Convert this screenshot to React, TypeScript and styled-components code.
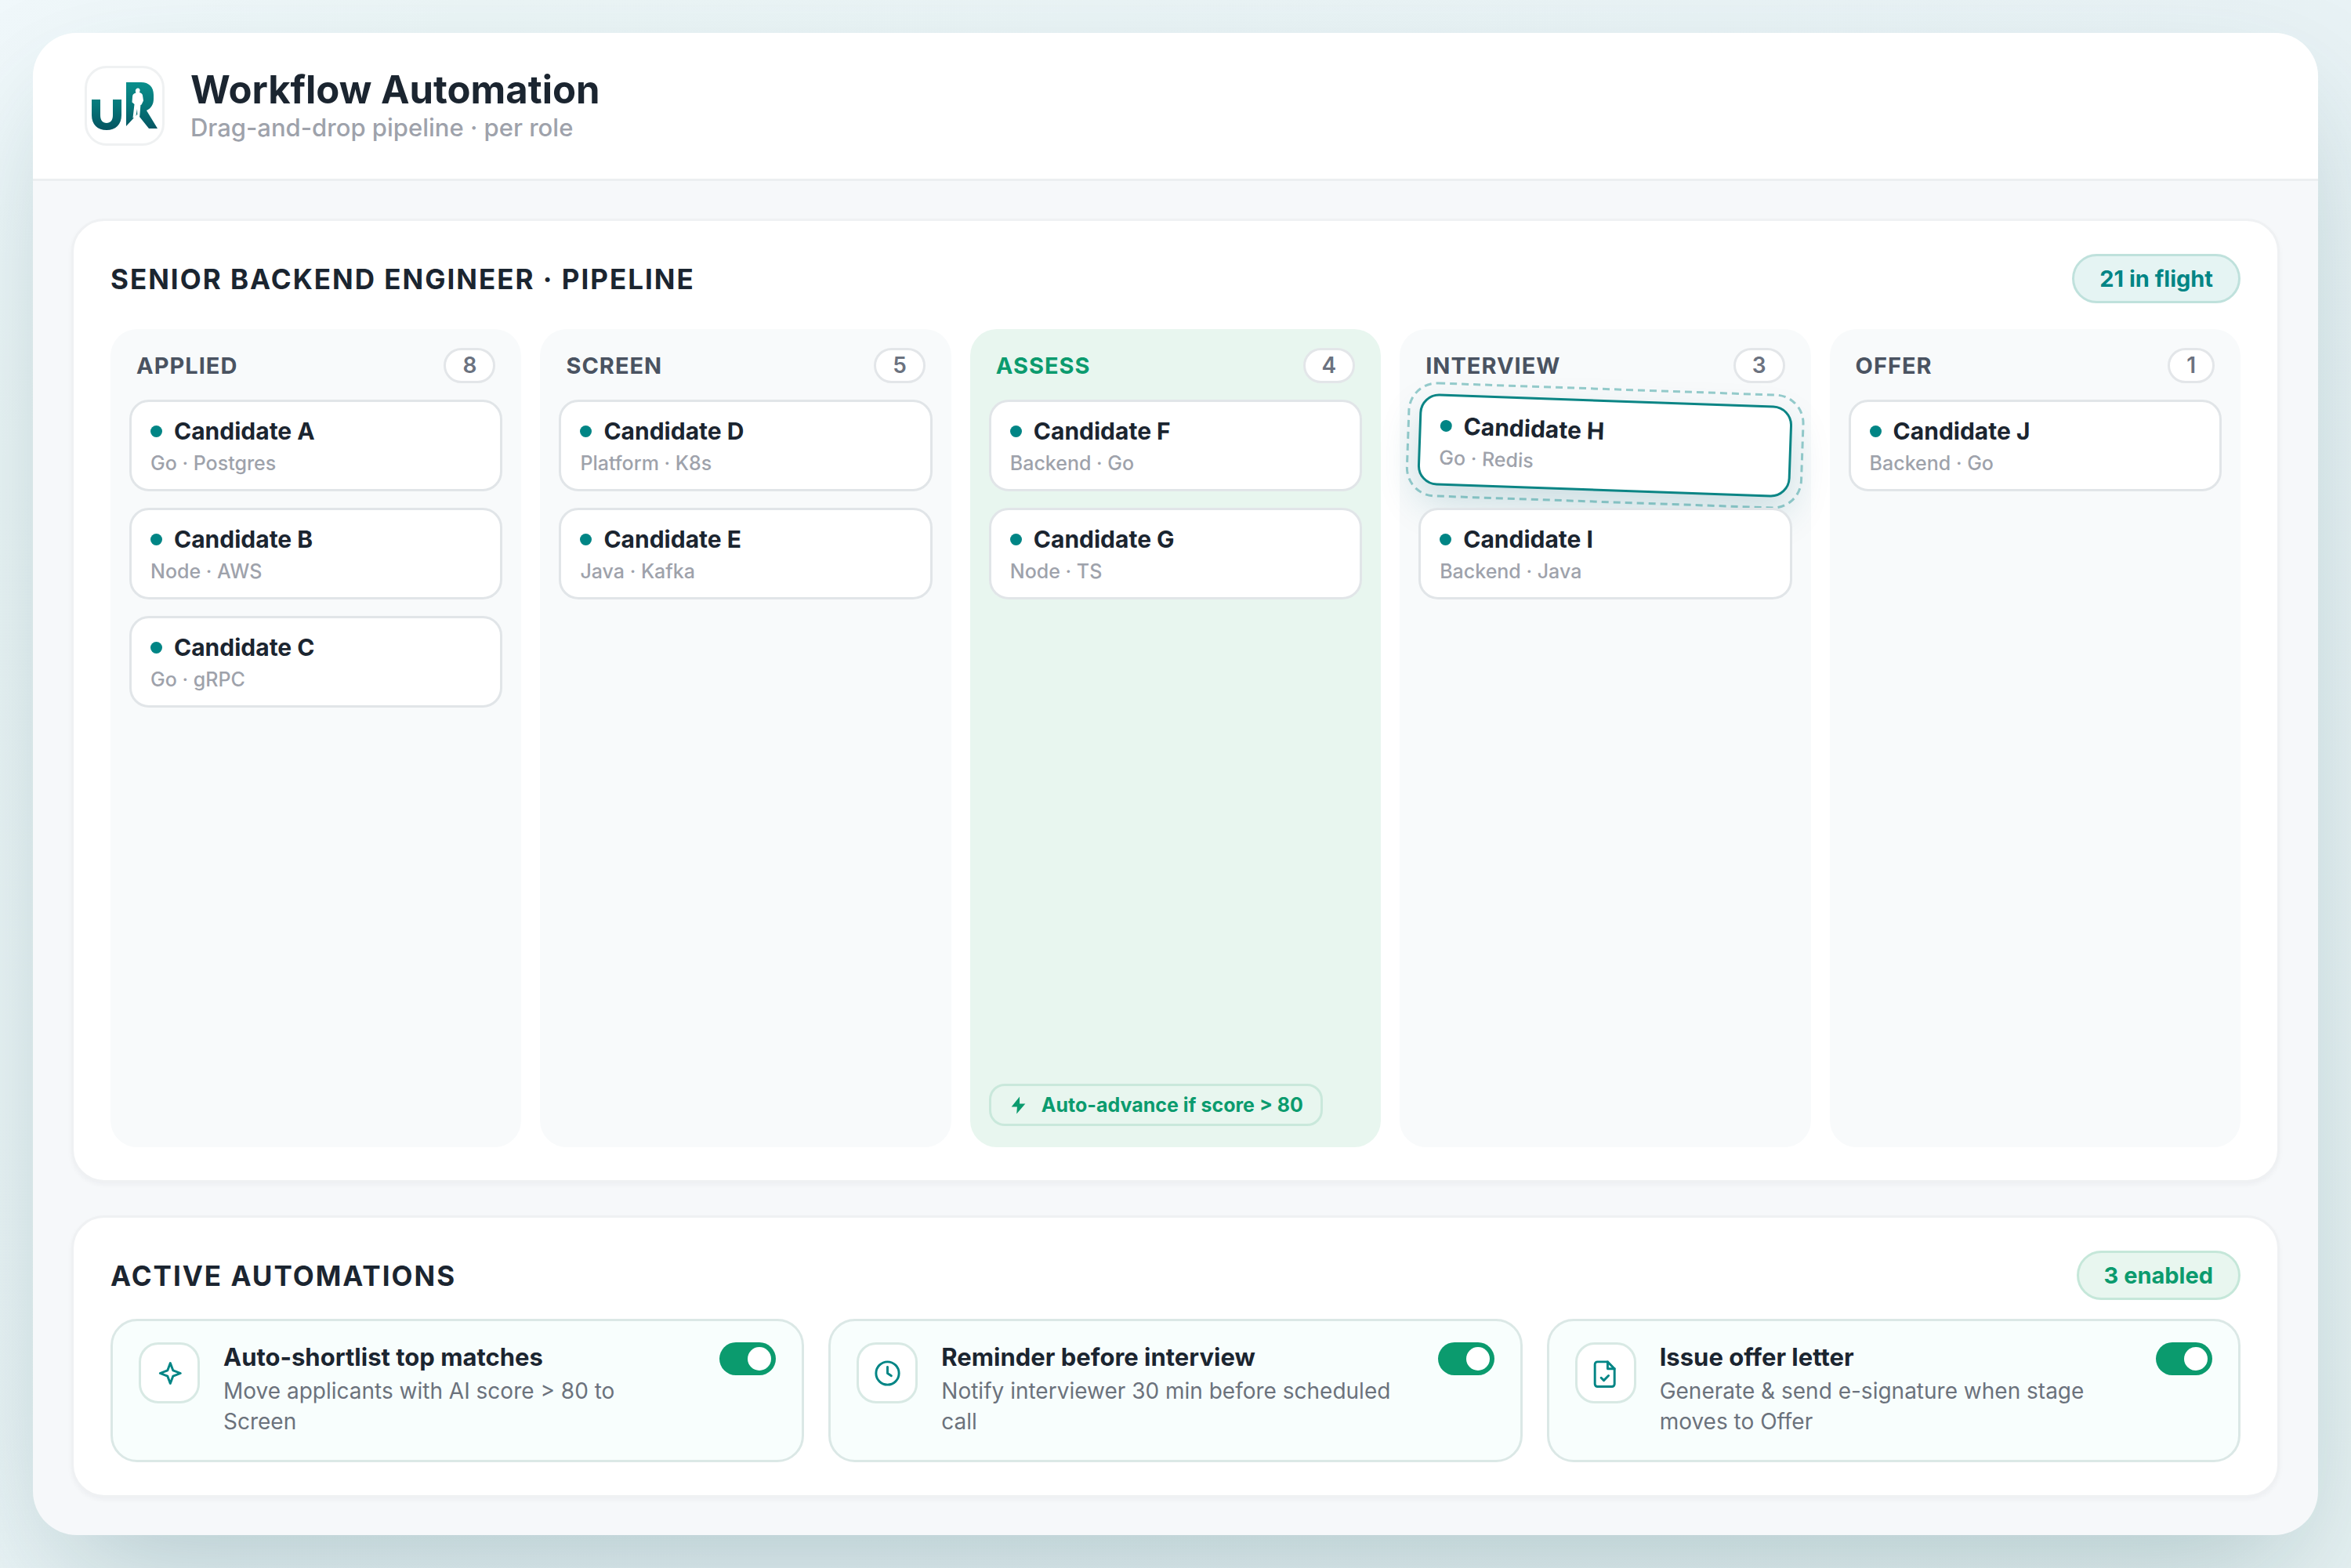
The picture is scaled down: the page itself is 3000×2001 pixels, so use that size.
import React from "react";
import styled, { createGlobalStyle, css } from "styled-components";

const INK = "#1b2530";
const TEAL = "#008585";
const GREEN = "#0b9b6e";

const GlobalStyle = createGlobalStyle`
  *, *::before, *::after { box-sizing: border-box; }
  body {
    margin: 0;
    font-family: Inter, "Liberation Sans", sans-serif;
    color: ${INK};
  }
  h1, h2, h3, p, ul { margin: 0; padding: 0; }
  ul { list-style: none; }
`;

const Page = styled.div`
  min-height: 100vh;
  display: flex;
  padding: 42px;
  overflow: hidden;
  background: linear-gradient(135deg, #f0f8fb 0%, #ebf5f6 12%, #e8f2f5 60%, #e6f1f2 100%);
`;

const Window = styled.main`
  flex: 1;
  min-width: 0;
  display: flex;
  flex-direction: column;
  border-radius: 56px;
  background: #f6f8fa;
  box-shadow: 0 68px 168px -34px rgba(10, 70, 80, 0.25);
`;

const Header = styled.header`
  display: flex;
  align-items: center;
  gap: 33px;
  padding: 42px 66px;
  border-bottom: 3px solid #eceff1;
  border-radius: 56px 56px 0 0;
  background: #fff;
`;

const LogoBox = styled.div`
  width: 102px;
  height: 102px;
  display: grid;
  place-items: center;
  border: 3px solid #eff1f2;
  border-radius: 28px;
  background: #fff;
`;

const Heading = styled.div`
  display: flex;
  flex-direction: column;
  gap: 3px;
`;

const Title = styled.h1`
  font-size: 49px;
  line-height: 52px;
  font-weight: 700;
`;

const Subtitle = styled.p`
  font-size: 31px;
  line-height: 38px;
  font-weight: 500;
  color: #9ea2ab;
`;

const Body = styled.div`
  flex: 1;
  display: flex;
  flex-direction: column;
  gap: 42px;
  padding: 48px 49px;
`;

const Panel = styled.section<{ $gap: number; $grow?: boolean }>`
  flex: ${(p) => (p.$grow ? "1 0 auto" : "none")};
  display: flex;
  flex-direction: column;
  gap: ${(p) => p.$gap}px;
  padding: 42px 47px;
  border: 3px solid #eff1f3;
  border-radius: 42px;
  background: #fff;
  box-shadow: 0 3px 6px rgba(20, 35, 45, 0.04);
`;

const PanelHead = styled.div`
  display: flex;
  align-items: center;
  justify-content: space-between;
`;

const PanelTitle = styled.h2`
  font-size: 35px;
  line-height: 42px;
  font-weight: 700;
  letter-spacing: 2px;
  text-transform: uppercase;
`;

const Chip = styled.span<{ $green?: boolean }>`
  padding: 11px 32px;
  border: 3px solid ${(p) => (p.$green ? "#c5e7d9" : "#bfe1dc")};
  border-radius: 32px;
  font-size: 29px;
  line-height: 35px;
  font-weight: 700;
  color: ${(p) => (p.$green ? GREEN : TEAL)};
  background: ${(p) => (p.$green ? "#e8f6ef" : "#e5f4f3")};
`;

const Board = styled.div`
  flex: 1;
  display: grid;
  grid-template-columns: repeat(5, minmax(0, 1fr));
  gap: 24px;
`;

const Column = styled.section<{ $active?: boolean }>`
  display: flex;
  flex-direction: column;
  align-items: stretch;
  gap: 21px;
  padding: 24px 24px 27px;
  border-radius: 34px;
  background: ${(p) => (p.$active ? "#e8f6ef" : "#f8fafb")};
`;

const ColumnHead = styled.div`
  display: flex;
  align-items: center;
  justify-content: space-between;
  padding: 0 9px;
`;

const ColumnTitle = styled.h3<{ $active?: boolean }>`
  font-size: 29px;
  line-height: 34px;
  font-weight: 700;
  letter-spacing: 1px;
  text-transform: uppercase;
  color: ${(p) => (p.$active ? GREEN : "#4a5361")};
`;

const Count = styled.span`
  padding: 2px 21px;
  border: 3px solid #e3e6e9;
  border-radius: 23px;
  font-size: 28px;
  line-height: 35px;
  font-weight: 600;
  color: #6b727f;
  background: #fff;
`;

const CardList = styled.ul`
  display: flex;
  flex-direction: column;
  gap: 21px;
`;

const Card = styled.li<{ $dragging?: boolean }>`
  position: relative;
  display: flex;
  flex-direction: column;
  gap: 8px;
  padding: 19px 24px 18px;
  border: 3px solid #e1e5e8;
  border-radius: 25px;
  background: #fff;
  ${(p) =>
    p.$dragging &&
    css`
      border-color: #0b8585;
      transform: rotate(2deg);
      box-shadow: 0 22px 50px rgba(0, 100, 115, 0.18);
    `}
`;

const Name = styled.span`
  display: flex;
  align-items: center;
  gap: 15px;
  font-size: 30px;
  line-height: 36px;
  font-weight: 700;

  &::before {
    content: "";
    width: 15px;
    height: 15px;
    border-radius: 50%;
    background: ${TEAL};
  }
`;

const Skills = styled.span`
  font-size: 25px;
  line-height: 30px;
  font-weight: 500;
  color: #9ea2ab;
`;

const DropOutline = styled.svg`
  position: absolute;
  inset: -18px;
  width: calc(100% + 36px);
  height: calc(100% + 36px);
  overflow: visible;
  pointer-events: none;

  rect {
    x: 1.5px;
    y: 1.5px;
    width: calc(100% - 3px);
    height: calc(100% - 3px);
    fill: none;
    stroke: ${TEAL};
    stroke-opacity: 0.4;
    stroke-width: 3px;
    stroke-dasharray: 9 6;
  }
`;

const Rule = styled.p`
  display: flex;
  align-items: center;
  align-self: flex-start;
  gap: 17px;
  margin-top: auto;
  padding: 9px 22px;
  border: 3px solid #c9e8db;
  border-radius: 20px;
  font-size: 25px;
  line-height: 30px;
  font-weight: 700;
  color: ${GREEN};
`;

const Automations = styled.div`
  display: grid;
  grid-template-columns: repeat(3, minmax(0, 1fr));
  gap: 31px;
`;

const Automation = styled.article`
  display: flex;
  align-items: flex-start;
  gap: 30px;
  padding: 27px 33px 29px;
  border: 3px solid #dbe8e6;
  border-radius: 34px;
  background: #f8fefd;
`;

const IconBox = styled.div`
  flex: none;
  width: 78px;
  height: 78px;
  display: grid;
  place-items: center;
  border: 3px solid #d8e9e4;
  border-radius: 25px;
  background: #fff;
  color: ${TEAL};
`;

const AutomationText = styled.div`
  flex: 1;
  min-width: 0;
  display: flex;
  flex-direction: column;
  gap: 5px;
  padding-right: 14px;
`;

const AutomationName = styled.label`
  font-size: 31px;
  line-height: 38px;
  font-weight: 700;
`;

const AutomationNote = styled.p`
  font-size: 28px;
  line-height: 39px;
  color: #6b727c;
`;

const Switch = styled.input`
  appearance: none;
  flex: none;
  width: 72px;
  height: 42px;
  margin: 0;
  padding: 6px;
  display: flex;
  justify-content: flex-start;
  border-radius: 21px;
  background: #c9d0d6;
  cursor: pointer;

  &::before {
    content: "";
    width: 30px;
    height: 30px;
    border-radius: 50%;
    background: #fff;
  }

  &:checked {
    justify-content: flex-end;
    background: ${GREEN};
  }
`;

const Logo = () => (
  <svg width="96" height="96" viewBox="0 0 96 96" aria-label="uR logo" role="img">
    <defs>
      <linearGradient id="logo" x1="0" y1="18" x2="0" y2="80" gradientUnits="userSpaceOnUse">
        <stop offset="0" stopColor="#0a8f8c" />
        <stop offset="0.5" stopColor="#067679" />
        <stop offset="1" stopColor="#055260" />
      </linearGradient>
    </defs>
    <path
      fill="url(#logo)"
      d="M6 40h11v20c0 6.500 3 10 8 10s8-3.500 8-10V40h11v20c0 12-7.500 19-19 19S6 72 6 60z"
    />
    <path
      fill="url(#logo)"
      d="M50 18h19c10 0 16 6 16 16v5c0 7-3 12-9 15l14 23H79L67 62l-3-3-14 15z"
    />
    <path
      fill="#fff"
      d="M65 25.500c1.800 0 2.800 1.400 2.600 3.300l-.6 2.200c2.800.9 4 2 4.200 5l.8 5.500-2.400 5-1.200.5-1.200 14.500-2.700 2.500-.5-12-2 11.500H58.500l2-17.500-3-2.500.5-7c.1-3 1.500-4.100 4.400-5l-.6-2.200c-.2-2 1.400-3.800 3.200-3.800z"
    />
  </svg>
);

const iconProps = {
  width: 39,
  height: 39,
  viewBox: "0 0 24 24",
  fill: "none",
  stroke: "currentColor",
  strokeWidth: 1.8,
  strokeLinecap: "round" as const,
  strokeLinejoin: "round" as const,
  "aria-hidden": true,
};

const SparkIcon = () => (
  <svg {...iconProps}>
    <path d="M12.500 4l2.200 5.800 5.800 2.200-5.800 2.200-2.200 5.800-2.200-5.800L4.500 12l5.800-2.200z" />
  </svg>
);

const ClockIcon = () => (
  <svg {...iconProps}>
    <circle cx="12" cy="12" r="9" />
    <path d="M12 7v5l3 2" />
  </svg>
);

const FileIcon = () => (
  <svg {...iconProps}>
    <path d="M13.800 3H5.800a2 2 0 0 0-2 2v15.500a2 2 0 0 0 2 2h11.400a2 2 0 0 0 2-2V8.500z" />
    <path d="M13.800 3v5.500h5.400" />
    <path d="M8.700 15.500l2.100 2.100 3.700-3.700" />
  </svg>
);

const BoltIcon = () => (
  <svg width="25" height="25" viewBox="0 0 24 24" fill="currentColor" aria-hidden="true">
    <path d="M13.500 1.500L3.500 14h7L9.800 22.500 20.500 10h-7z" />
  </svg>
);

type Stage = {
  title: string;
  count: number;
  active?: boolean;
  rule?: string;
  cards: { name: string; skills: string; dragging?: boolean }[];
};

const stages: Stage[] = [
  {
    title: "Applied",
    count: 8,
    cards: [
      { name: "Candidate A", skills: "Go · Postgres" },
      { name: "Candidate B", skills: "Node · AWS" },
      { name: "Candidate C", skills: "Go · gRPC" },
    ],
  },
  {
    title: "Screen",
    count: 5,
    cards: [
      { name: "Candidate D", skills: "Platform · K8s" },
      { name: "Candidate E", skills: "Java · Kafka" },
    ],
  },
  {
    title: "Assess",
    count: 4,
    active: true,
    rule: "Auto-advance if score > 80",
    cards: [
      { name: "Candidate F", skills: "Backend · Go" },
      { name: "Candidate G", skills: "Node · TS" },
    ],
  },
  {
    title: "Interview",
    count: 3,
    cards: [
      { name: "Candidate H", skills: "Go · Redis", dragging: true },
      { name: "Candidate I", skills: "Backend · Java" },
    ],
  },
  {
    title: "Offer",
    count: 1,
    cards: [{ name: "Candidate J", skills: "Backend · Go" }],
  },
];

const automations = [
  {
    id: "shortlist",
    icon: <SparkIcon />,
    name: "Auto-shortlist top matches",
    note: "Move applicants with AI score > 80 to Screen",
  },
  {
    id: "reminder",
    icon: <ClockIcon />,
    name: "Reminder before interview",
    note: "Notify interviewer 30 min before scheduled call",
  },
  {
    id: "offer",
    icon: <FileIcon />,
    name: "Issue offer letter",
    note: "Generate & send e-signature when stage moves to Offer",
  },
];

export default function App() {
  return (
    <Page>
      <GlobalStyle />
      <Window>
        <Header>
          <LogoBox>
            <Logo />
          </LogoBox>
          <Heading>
            <Title>Workflow Automation</Title>
            <Subtitle>Drag-and-drop pipeline · per role</Subtitle>
          </Heading>
        </Header>
        <Body>
          <Panel $gap={33} $grow>
            <PanelHead>
              <PanelTitle>Senior Backend Engineer · Pipeline</PanelTitle>
              <Chip>21 in flight</Chip>
            </PanelHead>
            <Board>
              {stages.map((stage) => (
                <Column key={stage.title} $active={stage.active}>
                  <ColumnHead>
                    <ColumnTitle $active={stage.active}>{stage.title}</ColumnTitle>
                    <Count>{stage.count}</Count>
                  </ColumnHead>
                  <CardList>
                    {stage.cards.map((card) => (
                      <Card key={card.name} $dragging={card.dragging}>
                        <Name>{card.name}</Name>
                        <Skills>{card.skills}</Skills>
                        {card.dragging && (
                          <DropOutline aria-hidden="true">
                            <rect rx="36" />
                          </DropOutline>
                        )}
                      </Card>
                    ))}
                  </CardList>
                  {stage.rule && (
                    <Rule>
                      <BoltIcon />
                      {stage.rule}
                    </Rule>
                  )}
                </Column>
              ))}
            </Board>
          </Panel>
          <Panel $gap={24}>
            <PanelHead>
              <PanelTitle>Active Automations</PanelTitle>
              <Chip $green>3 enabled</Chip>
            </PanelHead>
            <Automations>
              {automations.map((item) => (
                <Automation key={item.id}>
                  <IconBox>{item.icon}</IconBox>
                  <AutomationText>
                    <AutomationName htmlFor={item.id}>{item.name}</AutomationName>
                    <AutomationNote>{item.note}</AutomationNote>
                  </AutomationText>
                  <Switch type="checkbox" role="switch" id={item.id} defaultChecked />
                </Automation>
              ))}
            </Automations>
          </Panel>
        </Body>
      </Window>
    </Page>
  );
}
